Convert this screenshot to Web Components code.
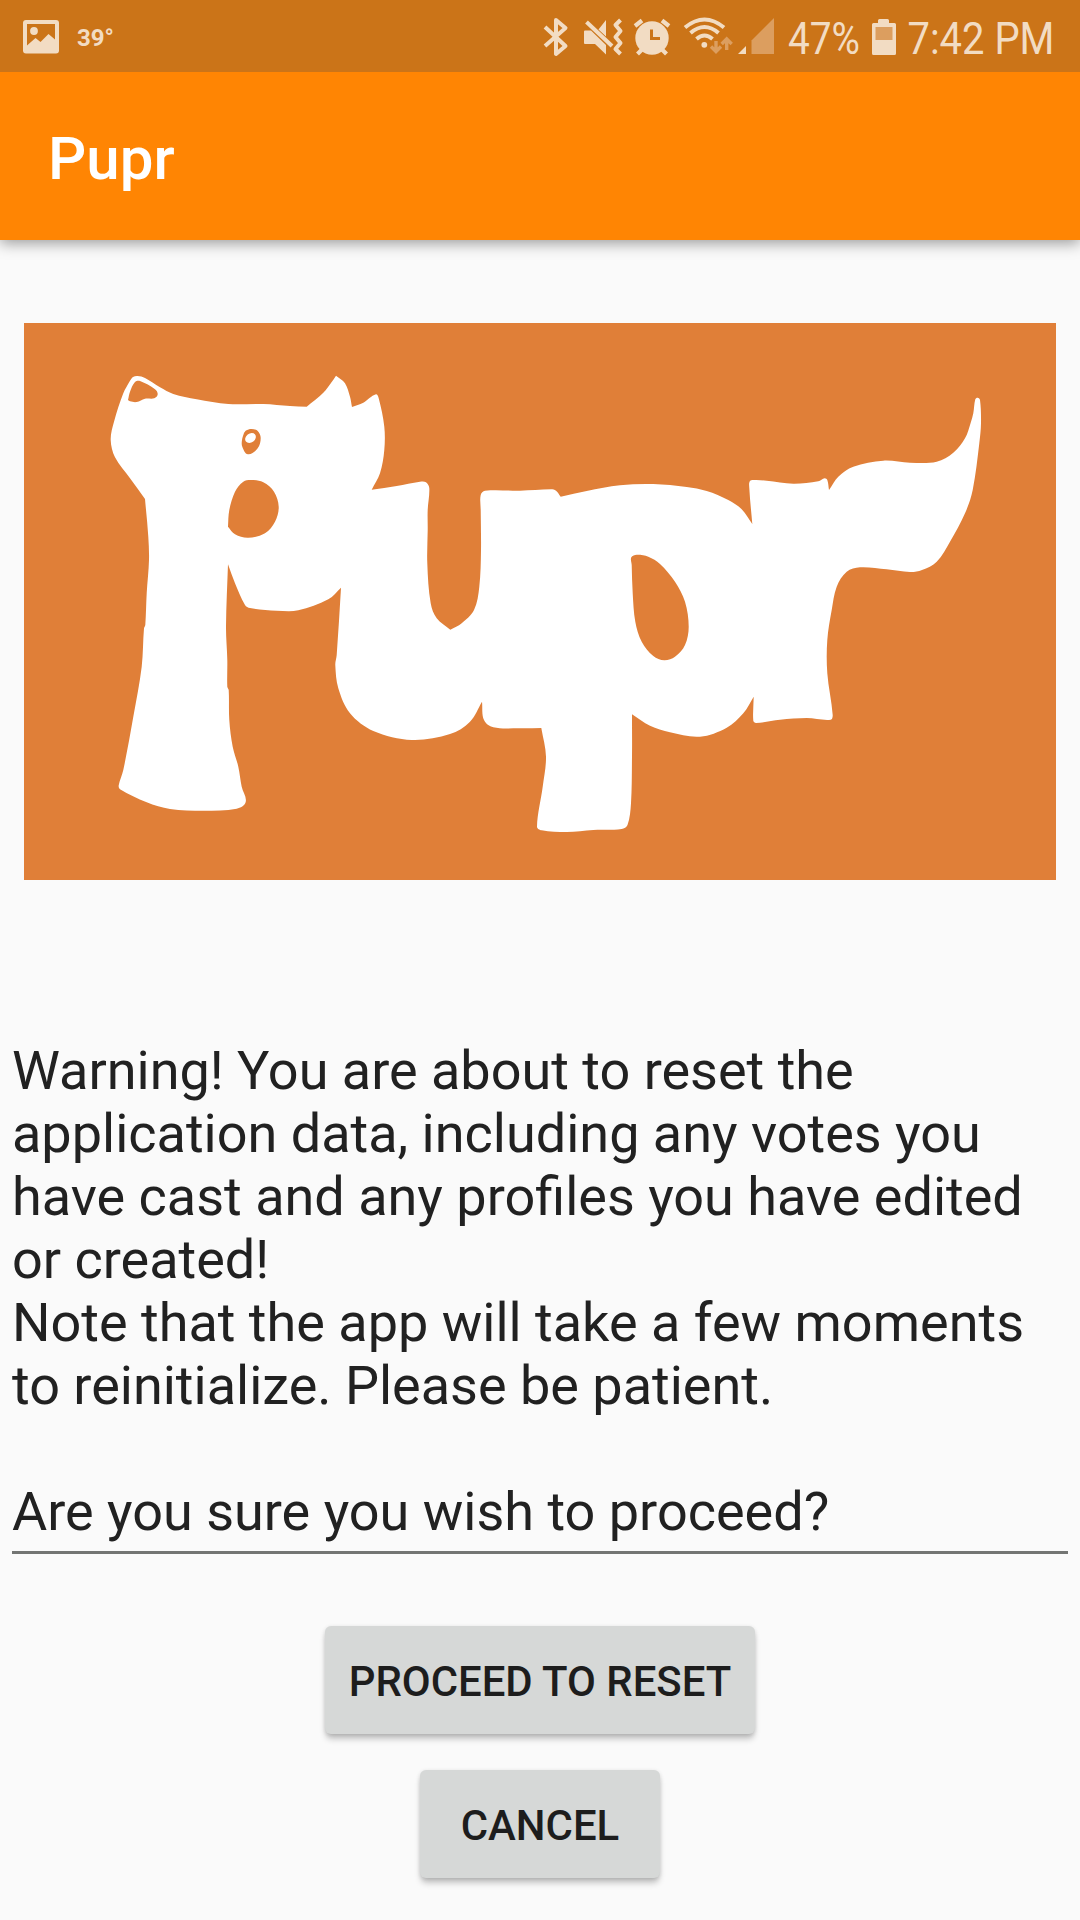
<!DOCTYPE html>
<html lang="en">
<head>
<meta charset="utf-8">
<title>Pupr</title>
<style>
  html, body { margin: 0; padding: 0; }
  body { width: 1080px; height: 1920px; overflow: hidden; background: #fafafa; font-family: Roboto, "Noto Sans", sans-serif; color: #212121; }
</style>
</head>
<body>
<pupr-screen></pupr-screen>
<script>
function define(name, html, setup) {
  const template = document.createElement('template');
  template.innerHTML = html;
  customElements.define(name, class extends HTMLElement {
    constructor() {
      super();
      const root = this.attachShadow({ mode: 'open' });
      root.append(template.content.cloneNode(true));
      if (setup) setup(root);
    }
  });
}

define('status-bar', `
<style>
  :host { display: flex; justify-content: space-between; position: relative; z-index: 1; height: 72px; background: #cb7418; --ink: #f2dcc3; --dim: #dc9e5f; }
  div { display: flex; }
  svg { display: block; flex: none; height: 72px; fill: var(--ink); }
  .line { fill: none; stroke: var(--ink); }
  .dim { fill: var(--dim); }
  text { font-family: Roboto, sans-serif; }
</style>
<div>
  <svg width="66" viewBox="0 0 66 72">
    <path fill-rule="evenodd" d="M26 20H56Q59 20 59 23V50.500Q59 53.500 56 53.500H26Q23 53.500 23 50.500V23Q23 20 26 20ZM27 24V45.500L35.500 38L40.500 42L48.500 34L55 39.500V24Z"/>
    <circle cx="34" cy="31" r="3.900"/>
  </svg>
  <svg width="60" viewBox="66 0 60 72"><text x="77" y="45.500" font-size="24.500" font-weight="700" textLength="37" lengthAdjust="spacingAndGlyphs">39°</text></svg>
</div>
<div>
  <svg width="42" viewBox="538 0 42 72"><path class="line" stroke-width="4" stroke-linejoin="round" d="M545 27L565.500 46L556 54V20L565.500 28L545 46"/></svg>
  <svg width="46" viewBox="580 0 46 72">
    <path d="M584 31.500Q584 30.500 585 30.500H591L606 45V54.500L595 44H585Q584 44 584 43ZM598.500 29.500L606 20V36.500Z"/>
    <path class="line" stroke-width="4" d="M586.500 22L612 46"/>
    <path class="line" stroke-width="4" stroke-linejoin="round" d="M620.500 20L615.500 25L620.500 31L615.500 37L620.500 43L615.500 49L620.500 54"/>
  </svg>
  <svg width="54" viewBox="626 0 54 72">
    <circle cx="652" cy="38" r="16.700"/>
    <path class="line" stroke-width="4.200" d="M635 26L642 20.500M669 26L662 20.500M637.500 54L643 48.500M666.500 54L661 48.500"/>
    <path fill="none" stroke="#cb7418" stroke-width="3" d="M651.500 29.500V38.500H660"/>
  </svg>
  <svg width="56" viewBox="680 0 56 72">
    <g class="line" stroke-width="4"><path d="M685 27.500Q704.500 11.500 724 27.500M690.500 33Q704.500 21 718.500 33M696.500 39Q704.500 32 712.500 39"/></g>
    <circle cx="704.300" cy="44.800" r="2.900"/>
    <path fill="none" stroke="var(--dim)" stroke-width="3.400" d="M716 41V51M711 46.500L716 51.500L721 46.500M726.700 50V39M721.700 44L726.700 39L731.700 44"/>
  </svg>
  <svg width="48" viewBox="736 0 48 72"><path d="M746 46V54H738Z"/><path class="dim" d="M774 18V54H751.500V40.500Z"/></svg>
  <svg width="296" viewBox="784 0 296 72">
    <text x="788" y="54" font-size="44.500" textLength="72" lengthAdjust="spacingAndGlyphs">47%</text>
    <path d="M873.500 23H878V20.500Q878 19 879.500 19H887.500Q889 19 889 20.500V23H894.500Q896 23 896 24.500V53.500Q896 55 894.500 55H873.500Q872 55 872 53.500V24.500Q872 23 873.500 23Z"/>
    <path class="dim" d="M875.500 27H892.500V40H875.500Z"/>
    <text x="907.500" y="54" font-size="44.500" textLength="147" lengthAdjust="spacingAndGlyphs">7:42 PM</text>
  </svg>
</div>`);

define('app-bar', `
<style>
  :host { display: flex; align-items: center; box-sizing: border-box; height: 168px; padding: 5px 48px 0; background: #ff8503; color: #fff; font-size: 60px; font-weight: 500; line-height: 70px; box-shadow: 0 3px 14px rgba(0,0,0,.4); }
</style>
<slot></slot>`);

/* Outline data: "|" after a point makes it a sharp corner; the runs between corners are smooth. */
const BODY = `130,380.7 133,377 137.5,376 145,378 160,387.3 173.3,394 196.7,399.3 228.3,404 263.3,404 290,406 306.7,406.7 | 323.3,392.7 331,383 336,375.7 | 345,383.3 350,396.7 352,407 | 363.3,402.7 376,394.3 378.7,398.3 384.3,426.7 384.3,450 380,473.3 371.7,489.7 | 396.7,486 420,481.7 426,482.3 429.3,488.3 427.7,510 427.7,530 427.3,563.3 430.7,603.3 436.7,618.3 450.3,629.7 | 461.7,623.3 474,610 479.3,586.7 481,550 480.7,510 480.7,495 485,490.7 520,490.7 551,489.3 556,490.7 560.7,496.7 | 586.7,491 620,485.3 653.3,484 686.7,487 706.7,491 728.3,500 741.7,509.3 752.3,524 | 749.3,488 750,481 755,480 766.7,480.7 793.3,483.7 818.3,481.3 824.7,478.3 827.3,480 829,490 | 838.3,476.7 853.3,466.7 883.3,460.7 910,462.7 936.7,461.7 953.3,452.7 965,438.3 970.7,422.7 973.3,413.3 975.3,399.3 977.7,397.8 980,400 981,423.3 979.3,443.3 972.7,490 965,513.3 950,541.7 936.7,561.7 922,570 910,572 886.7,569.3 860,567.3 846.7,571.7 836.7,586.7 831.7,610 827.3,640 827.3,673.3 832.7,715 830.7,719.7 806.7,718 780,719.7 756,723 753.3,720.7 753.7,696.7 | 743.3,713.3 726.7,727.7 700,736.7 670,732.3 650,725.7 632,714.3 | 632,756.7 631,803.3 627.5,825 621.7,829 593.3,830 566.7,832 541.7,830.3 537,826.7 542.7,786.7 546,756.7 541.3,728 | 520,728.3 493.3,727.3 484,720 482,701.7 | 470,721.7 450,734 411.7,740 373.3,731 350,713.3 338.3,688.3 335.3,665 336.7,655 341,587.7 | 328.3,599.3 298.3,610.3 276.7,610.7 250,608 245,605 235,583.3 228,564.3 | 226,626.7 227.3,660 227.3,686.7 228.7,690 229.3,720 232.7,746.7 238.3,766.7 241.7,786.7 245.7,802 236.7,808.7 203.3,810.7 170,809 146.7,802.3 120,789.3 118.7,785.3 123.3,770 133.3,716.7 141.7,666.7 144,628.3 145.3,625 146.7,593.3 149,560 148.3,536.7 145,499 | 130,478.3 115,457.3 110.7,440 114,421.7 123.3,393.3 130,380.7 |`;
const HOLES = [
  '228,526.7 229.3,510 235,491.7 243.3,481.7 251.7,480 263.3,482.3 274,491.7 278.7,506.7 275,521.7 265,533.3 248.3,537.7 235,534.3 228,526.7 |',
  '244,433 246,430.500 251.7,429 257.7,431 260.7,438 257.7,448.3 248,454.3 242.3,446.7 242,440 244,433 |',
  '128,400 130,391.7 135,382 140,381 155,389.3 157.7,394.3 154.3,398.3 145,398.7 136.7,402 130,401.3 128,400 |',
  '631.7,565 | 631.3,557.3 636.7,554.7 648.3,556.7 660,564 675,581.7 685,601.7 688.7,626.7 685,645 675,656.7 664.3,660.3 653.3,656 641.7,641.7 635.3,621.7 632.7,593.3 631.7,565 |'
];

function smoothPath(data) {
  let runStart = null, d = '';
  for (const part of data.split('|')) {
    const pts = part.trim().split(/\s+/).filter(Boolean).map(p => p.split(',').map(Number));
    if (!pts.length) continue;
    const run = runStart ? [runStart, ...pts] : pts;
    if (!runStart) d = 'M' + run[0];
    for (let i = 0; i < run.length - 1; i++) {
      const a = run[i - 1] || run[i], b = run[i], c = run[i + 1], e = run[i + 2] || c;
      const len = Math.hypot(c[0] - b[0], c[1] - b[1]);
      const handle = (p, from, to, sign) => {
        const l = Math.hypot(to[0] - from[0], to[1] - from[1]) || 1;
        return [0, 1].map(k => (p[k] + sign * (to[k] - from[k]) / l * len / 3).toFixed(1));
      };
      d += 'C' + handle(b, a, c, 1) + ' ' + handle(c, b, e, -1) + ' ' + c;
    }
    runStart = run[run.length - 1];
  }
  return d + 'Z';
}

define('pupr-logo', `
<style>
  :host { display: block; height: 557px; background: #e07f38; }
  svg { display: block; width: 100%; height: 100%; fill: #fff; }
</style>
<svg viewBox="24 323 1032 557" role="img" aria-label="Dog logo">
  <path fill-rule="evenodd"/>
  <ellipse cx="250.500" cy="438" rx="5.800" ry="4.500" transform="rotate(-38 250.500 438)"/>
</svg>`, root => root.querySelector('path').setAttribute('d', [BODY, ...HOLES].map(smoothPath).join('')));

define('message-field', `
<style>
  :host { display: block; box-sizing: border-box; height: 515px; border-bottom: 3px solid #737573; font-size: 54px; line-height: 63px; color: #212121; }
  slot { display: block; white-space: pre-line; }
</style>
<slot></slot>`);

define('raised-button', `
<style>
  :host { display: block; }
  button { display: flex; align-items: center; justify-content: center; box-sizing: border-box; height: 108px; min-width: 240px; padding: 2px 24px 0; border: 0; border-radius: 6px; background: #d6d8d7; color: #1d1d1d; font: 500 41.9px/49px Roboto, sans-serif; white-space: nowrap; box-shadow: 0 6px 6px -1px rgba(0,0,0,.22), 0 1px 4px rgba(0,0,0,.13); }
</style>
<button><slot></slot></button>`);

define('pupr-screen', `
<style>
  :host { display: flex; flex-direction: column; width: 1080px; height: 1920px; background: #fafafa; }
  main { display: flex; flex-direction: column; }
  pupr-logo { margin: 83px 24px 0; }
  message-field { margin: 159px 12px 0; }
  .actions { display: flex; flex-direction: column; align-items: center; gap: 36px; margin-top: 72px; }
</style>
<status-bar></status-bar>
<app-bar>Pupr</app-bar>
<main>
  <pupr-logo></pupr-logo>
  <message-field>Warning! You are about to reset the
application data, including any votes you
have cast and any profiles you have edited
or created!
Note that the app will take a few moments
to reinitialize. Please be patient.

Are you sure you wish to proceed?</message-field>
  <div class="actions">
    <raised-button>PROCEED TO RESET</raised-button>
    <raised-button>CANCEL</raised-button>
  </div>
</main>`);
</script>
</body>
</html>
